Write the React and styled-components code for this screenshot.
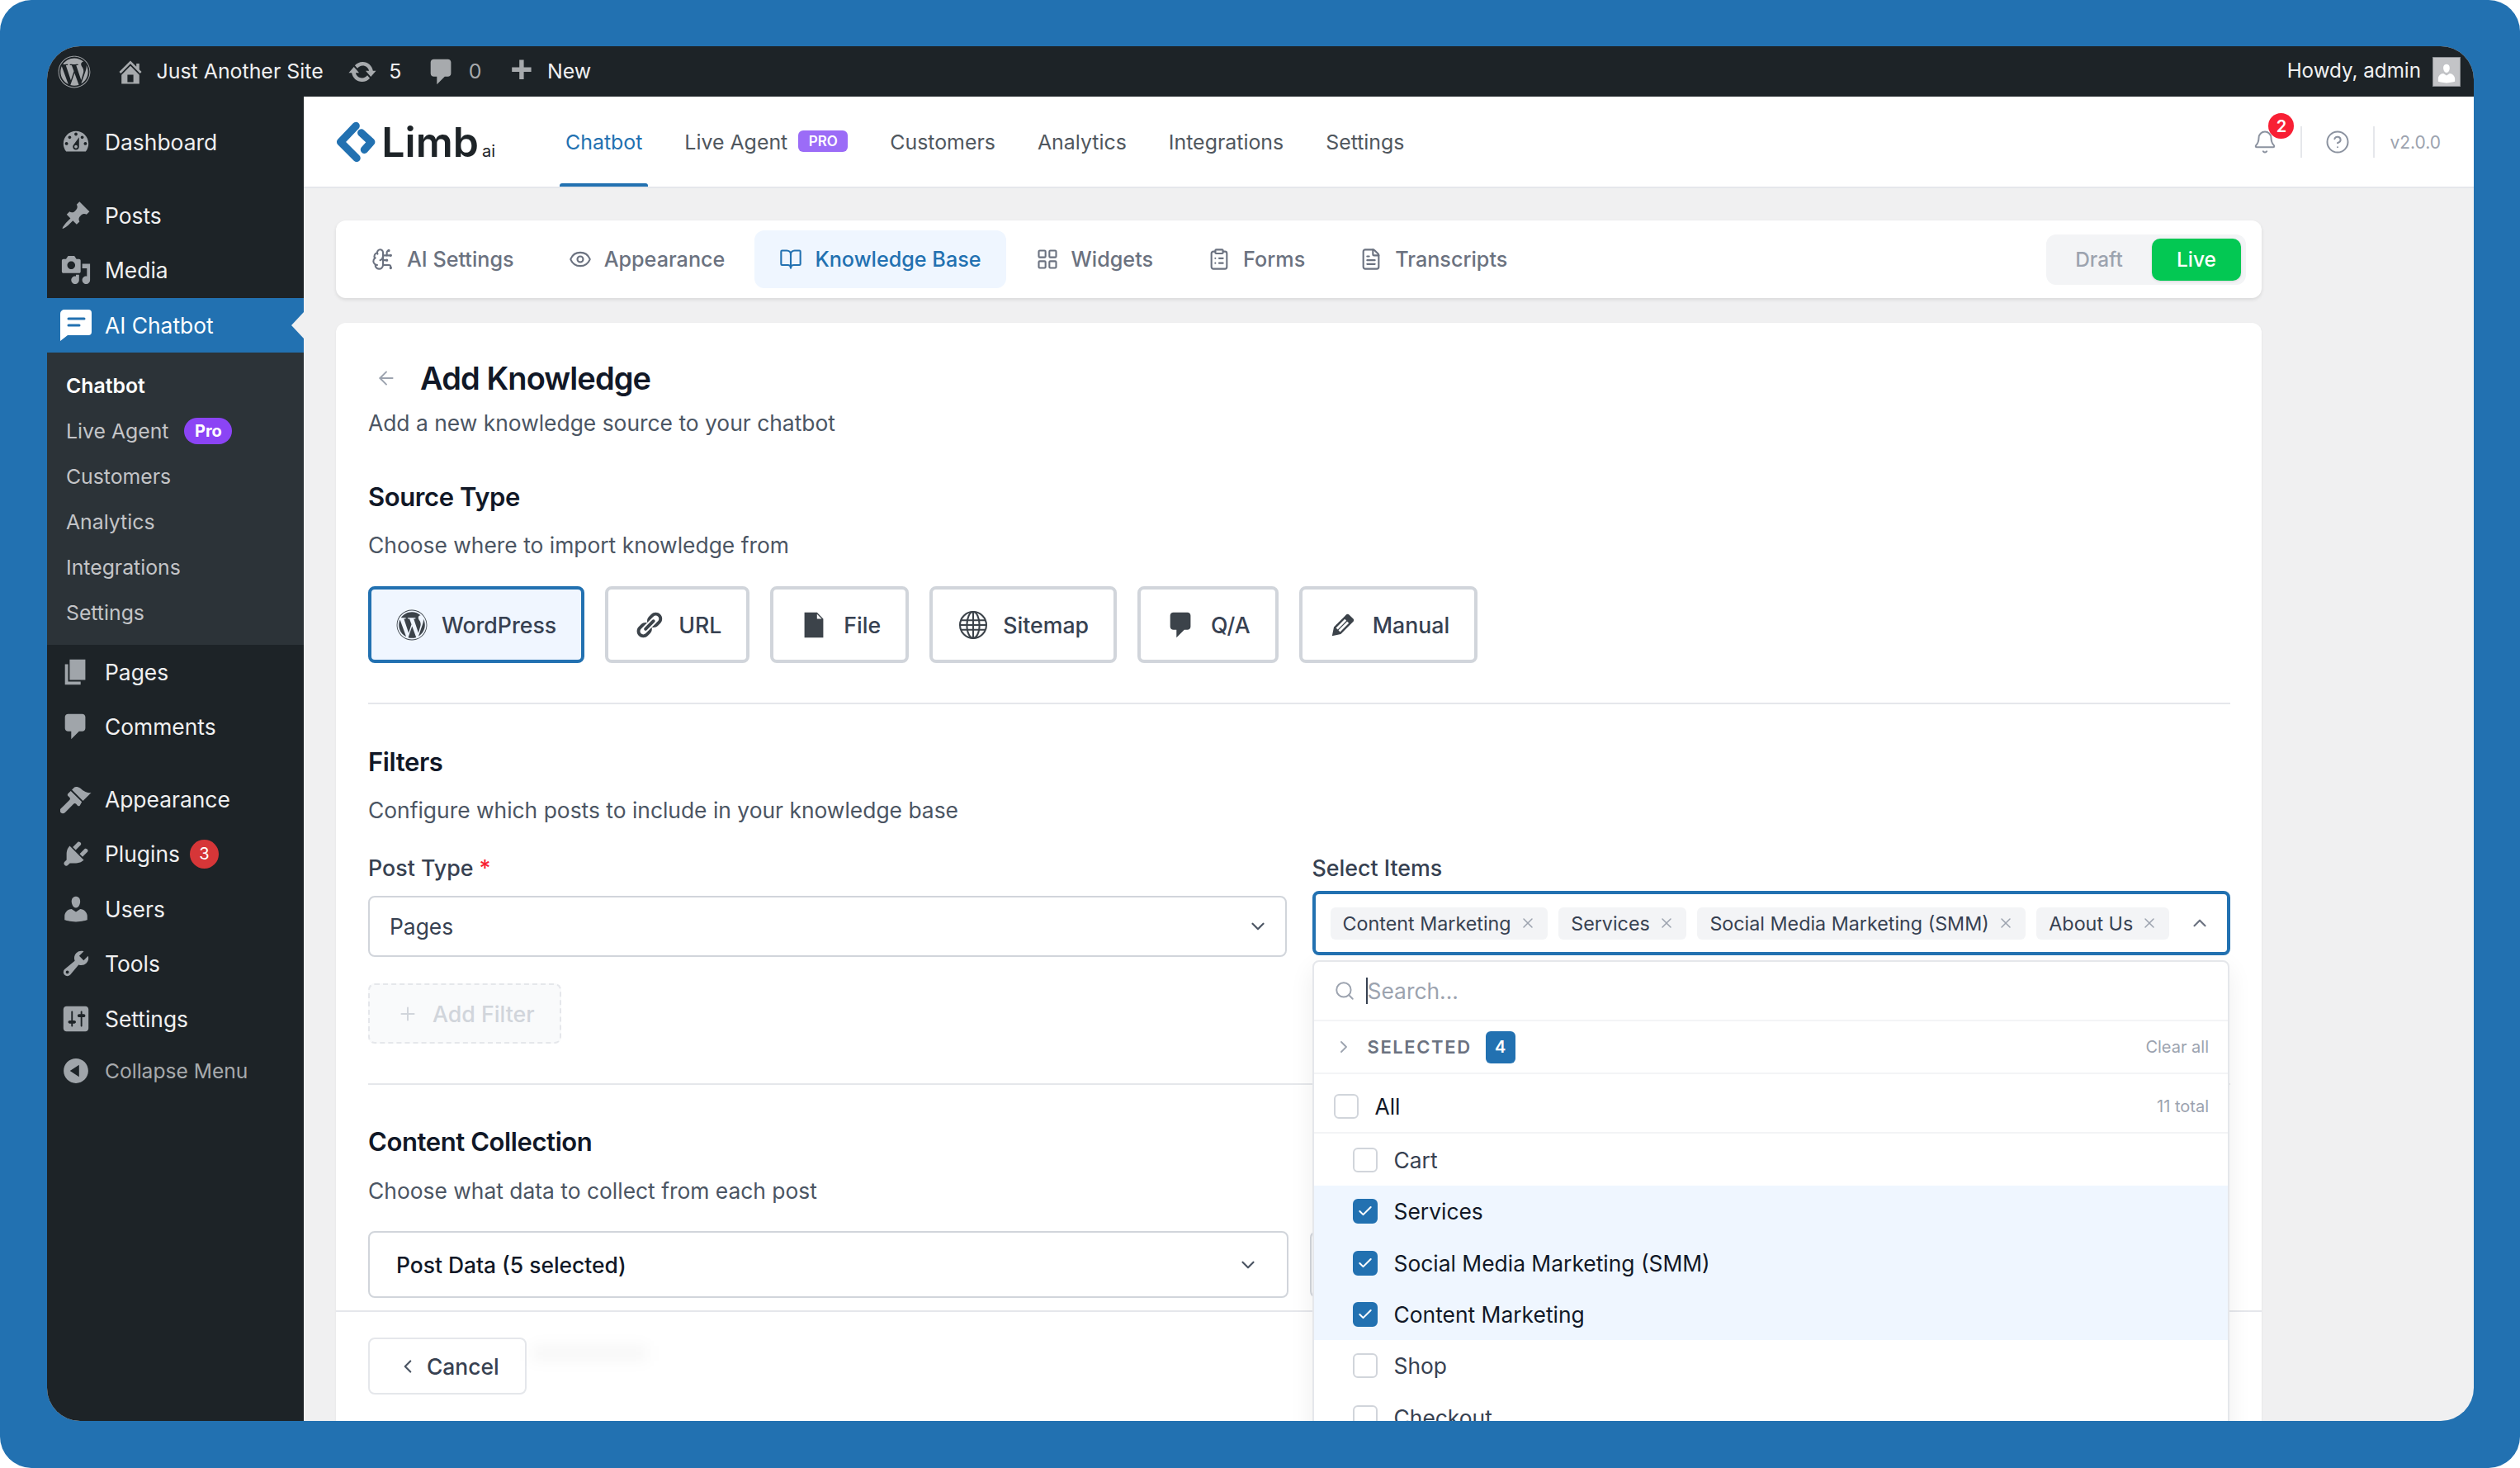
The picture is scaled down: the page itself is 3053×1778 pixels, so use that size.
import React from 'react';
import styled, { createGlobalStyle } from 'styled-components';
import {
  ArrowLeft, BookOpen, Bell, BrainCircuit, Check, ChevronDown, ChevronLeft, ChevronRight, ChevronUp,
  CircleHelp, ClipboardList, Eye, FileText, LayoutGrid, Plus, Search, X,
} from 'lucide-react';
import { FaWordpress } from 'react-icons/fa';

const Global = createGlobalStyle`
  * { box-sizing: border-box; }
  html, body { margin: 0; padding: 0; background: #fff; }
  body { font-family: Inter, "Liberation Sans", sans-serif; -webkit-font-smoothing: antialiased; }
`;

const Dash = ({ d, size = 38, color = 'currentColor' }) => (
  <svg width={size} height={size} viewBox="0 0 20 20" fill={color}><path d={d} /></svg>
);

const P = {
  home: 'M16 8.5l1.53 1.53-1.06 1.06L10 4.62l-6.47 6.47-1.06-1.06L10 2.5l4 4v-2h2v4zm-6-2.46l6 5.99V18H4v-5.97zM12 17v-5H8v5h4z',
  update: 'M10.2 3.28c3.53 0 6.43 2.61 6.92 6h2.08l-3.5 4-3.5-4h2.32c-.45-1.97-2.21-3.45-4.32-3.45-1.45 0-2.73.71-3.54 1.78L4.95 5.66C6.23 4.2 8.11 3.28 10.2 3.28zm-.4 13.44c-3.52 0-6.43-2.61-6.92-6H.8l3.5-4c1.17 1.33 2.33 2.67 3.5 4H5.48c.45 1.97 2.21 3.45 4.32 3.45 1.45 0 2.73-.71 3.54-1.78l1.71 1.95c-1.28 1.46-3.15 2.38-5.25 2.38z',
  comment: 'M5 2h9c1.1 0 2 .9 2 2v7c0 1.1-.9 2-2 2h-2l-5 5v-5H5c-1.1 0-2-.9-2-2V4c0-1.1.9-2 2-2z',
  plus: 'M17 7v3h-5v5H9v-5H4V7h5V2h3v5h5z',
  dashboard: 'M3.76 16h12.48c1.1-1.37 1.76-3.11 1.76-5 0-4.42-3.58-8-8-8s-8 3.58-8 8c0 1.89.66 3.63 1.76 5zM10 4c.55 0 1 .45 1 1s-.45 1-1 1-1-.45-1-1 .45-1 1-1zM6 6c.55 0 1 .45 1 1s-.45 1-1 1-1-.45-1-1 .45-1 1-1zm8 0c.55 0 1 .45 1 1s-.45 1-1 1-1-.45-1-1 .45-1 1-1zm-5.37 5.55L12 7v6c0 1.1-.9 2-2 2s-2-.9-2-2c0-.57.24-1.08.63-1.45zM4 10c.55 0 1 .45 1 1s-.45 1-1 1-1-.45-1-1 .45-1 1-1zm12 0c.55 0 1 .45 1 1s-.45 1-1 1-1-.45-1-1 .45-1 1-1zm-5 3c0-.55-.45-1-1-1s-1 .45-1 1 .45 1 1 1 1-.45 1-1z',
  pin: 'M10.44 3.02l1.82-1.82 6.36 6.35-1.83 1.82c-1.05-.68-2.48-.57-3.41.36l-.75.75c-.92.93-1.04 2.35-.35 3.41l-1.83 1.82-2.41-2.41-2.8 2.79c-.42.42-3.38 2.71-3.8 2.29s1.86-3.39 2.28-3.81l2.79-2.79L4.1 9.36l1.83-1.82c1.05.69 2.48.57 3.4-.36l.75-.75c.93-.92 1.05-2.35.36-3.41z',
  media: 'M13 11V4c0-.55-.45-1-1-1h-1.67L9 1H5L3.67 3H2c-.55 0-1 .45-1 1v7c0 .55.45 1 1 1h10c.55 0 1-.45 1-1zM7 4.5c1.38 0 2.5 1.12 2.5 2.5S8.38 9.5 7 9.5 4.5 8.38 4.5 7 5.62 4.5 7 4.5zM14 6h5v10.5c0 1.38-1.12 2.5-2.5 2.5S14 17.88 14 16.5s1.12-2.5 2.5-2.5c.17 0 .34.02.5.05V9h-3V6zm-4 8.05V13h2v3.5c0 1.38-1.12 2.5-2.5 2.5S7 17.88 7 16.5 8.12 14 9.5 14c.17 0 .34.02.5.05z',
  page: 'M6 15V2h10v13H6zm-1 1h8v2H3V5h2v11z',
  brush: 'M14.48 11.06L7.41 3.99l1.5-1.5c.5-.56 2.3-.47 3.51.32 1.21.8 1.43 1.28 2.91 2.1 1.18.64 2.45 1.26 4.45.85zm-.71.71L6.7 4.7 4.93 6.47c-.39.39-.39 1.02 0 1.41l1.06 1.06c.39.39.39 1.03 0 1.42-.6.6-4.84 4.84-5.6 5.6-.78.78-.78 1.9 0 2.6.7.7 1.8.7 2.6 0l5.6-5.6c.39-.39 1.02-.39 1.41 0l1.06 1.06c.39.39 1.03.39 1.42 0z',
  plug: 'M13.11 4.36L9.87 7.6 8 5.73l3.24-3.24c.35-.34 1.05-.2 1.56.32.52.51.66 1.21.31 1.55zm-8 1.77l.91-1.12 9.01 9.01-1.19.84c-.71.71-2.63 1.16-3.82 1.16H6.14L4.9 17.26c-.59.59-1.54.59-2.12 0-.59-.58-.59-1.53 0-2.12l1.24-1.24v-3.88c0-1.13.4-3.19 1.09-3.89zm7.26 3.97l3.24-3.24c.34-.35 1.04-.21 1.55.31.52.51.66 1.21.31 1.55l-3.24 3.25z',
  users: 'M10 9.25c-2.27 0-2.73-3.44-2.73-3.44C7 4.02 7.82 2 9.97 2c2.16 0 2.98 2.02 2.71 3.81 0 0-.41 3.44-2.68 3.44zm0 2.57L12.72 10c2.39 0 4.52 2.33 4.52 4.53v2.49s-3.65 1.13-7.24 1.13c-3.65 0-7.24-1.13-7.24-1.13v-2.49c0-2.25 1.94-4.48 4.47-4.48z',
  tools: 'M16.68 9.77c-1.34 1.34-3.3 1.67-4.95.99l-5.41 6.52c-.99.99-2.59.99-3.58 0s-.99-2.59 0-3.57l6.52-5.42c-.68-1.65-.35-3.61.99-4.95 1.28-1.28 3.12-1.62 4.72-1.06l-2.89 2.89 2.82 2.82 2.86-2.87c.53 1.58.18 3.39-1.08 4.65zM3.81 16.21c.4.39 1.04.39 1.43 0 .4-.4.4-1.04 0-1.43-.39-.4-1.03-.4-1.43 0-.39.39-.39 1.03 0 1.43z',
  settings: 'M18 16V4c0-1.1-.9-2-2-2H4c-1.1 0-2 .9-2 2v12c0 1.1.9 2 2 2h12c1.1 0 2-.9 2-2zM8 11h1c.55 0 1 .45 1 1s-.45 1-1 1H8v1.5c0 .28-.22.5-.5.5s-.5-.22-.5-.5V13H6c-.55 0-1-.45-1-1s.45-1 1-1h1V5.5c0-.28.22-.5.5-.5s.5.22.5.5V11zm5-2h-1c-.55 0-1-.45-1-1s.45-1 1-1h1V5.5c0-.28.22-.5.5-.5s.5.22.5.5V7h1c.55 0 1 .45 1 1s-.45 1-1 1h-1v5.5c0 .28-.22.5-.5.5s-.5-.22-.5-.5V9z',
  collapse: 'M10 2.16c4.33 0 7.84 3.51 7.84 7.84s-3.51 7.84-7.84 7.84S2.16 14.33 2.16 10 5.71 2.16 10 2.16zm2 11.72V6.12L6.18 9.97z',
  link: 'M17.74 2.76c1.68 1.69 1.68 4.41 0 6.1l-1.53 1.52c-1.12 1.12-2.7 1.47-4.14 1.09l2.62-2.61.76-.77.76-.76c.84-.84.84-2.2 0-3.04-.84-.85-2.2-.85-3.04 0l-.77.76-3.38 3.38c-.37-1.44-.02-3.02 1.1-4.14l1.52-1.53c1.69-1.68 4.42-1.68 6.1 0zM8.59 13.43l5.34-5.34c.42-.42.42-1.1 0-1.52-.44-.43-1.13-.39-1.53 0l-5.33 5.34c-.42.42-.42 1.1 0 1.52.44.43 1.13.39 1.52 0zm-.76 2.29l4.14-4.15c.38 1.44.03 3.02-1.09 4.14l-1.52 1.53c-1.69 1.68-4.41 1.68-6.1 0-1.68-1.68-1.68-4.42 0-6.1l1.53-1.52c1.12-1.12 2.7-1.47 4.14-1.1l-4.14 4.15c-.85.84-.85 2.2 0 3.05.84.84 2.2.84 3.04 0z',
  file: 'M12 2l4 4v12H4V2h8zm0 4h3l-3-3v3z',
  edit: 'M13.89 3.39l2.71 2.72c.46.46.42 1.24.03 1.64l-8.01 8.02-5.56 1.16 1.16-5.58s7.6-7.63 7.99-8.03c.39-.39 1.22-.39 1.68.07zm-2.73 2.79l-5.59 5.61 1.11 1.11 5.54-5.65zm-2.97 8.23l5.58-5.6-1.07-1.08-5.59 5.6z',
};

const Globe = () => (
  <svg width="38" height="38" viewBox="0 0 20 20" fill="none" stroke="#3c434a" strokeWidth="1.1">
    <circle cx="10" cy="10" r="8.4" />
    <ellipse cx="10" cy="10" rx="4" ry="8.4" />
    <path d="M10 1.6v16.8M2.2 7h15.6M2.2 13h15.6M1.6 10h16.8" />
  </svg>
);

const Page = styled.div`
  width: 3053px; height: 1778px; background: #2271b1; border-radius: 38px;
  padding: 56px 56px 57px 57px;
`;
const Window = styled.div`
  width: 100%; height: 100%; border-radius: 40px; overflow: hidden;
  display: flex; flex-direction: column; background: #f0f0f1;
`;
const TopBar = styled.header`
  height: 61px; flex: none; background: #1d2327; color: #f0f0f1; display: flex; align-items: center;
  justify-content: space-between; padding: 0 16px 0 13px; font-size: 24.9px; line-height: 1;
`;
const TopGroup = styled.div`display: flex; align-items: center; gap: 29.5px;`;
const TopItem = styled.div`
  display: flex; align-items: center; gap: 14px; color: ${p => (p.$dim ? '#a7aaad' : '#f0f0f1')};
  font-size: ${p => p.$fs || 24.9}px;
  svg { color: #a7aaad; display: block; }
`;
const Avatar = styled.div`
  width: 34px; height: 36px; background: #c3c4c7; border: 1px solid #8c8f94; overflow: hidden;
  display: flex; align-items: flex-end; justify-content: center;
`;
const Body = styled.div`flex: 1; min-height: 0; display: flex;`;
const Side = styled.nav`
  width: 311px; flex: none; background: #1d2327; padding-top: 22px; display: flex; flex-direction: column;
`;
const MenuGroup = styled.div`margin-bottom: ${p => p.$mb || 0}px;`;
const MenuRow = styled.div`
  position: relative; height: ${p => p.$h || 66.5}px; display: flex; align-items: center; gap: 16px; padding-left: 16px;
  font-size: ${p => (p.$dim ? 24.6 : 26.4)}px; color: ${p => (p.$dim ? '#a7aaad' : '#f0f0f1')};
  background: ${p => (p.$active ? '#2271b1' : 'transparent')};
  ${p => p.$active && 'color: #fff;'}
  svg { color: #a0a5aa; flex: none; display: block; }
  ${p => p.$active && `&::after {
    content: ''; position: absolute; right: 0; top: 50%; margin-top: -16px;
    border: solid transparent; border-width: 16px 15px 16px 0; border-right-color: #f0f0f1;
  }`}
`;
const Bubble = styled.span`
  width: 35px; height: 35px; border-radius: 50%; background: #d63638; color: #fff; font-size: 20px;
  display: inline-flex; align-items: center; justify-content: center; margin-left: -4px;
`;
const Sub = styled.div`background: #2c3338; padding: 12.5px 0 11px;`;
const SubRow = styled.div`
  height: 55px; display: flex; align-items: center; gap: 19px; padding-left: 23px; font-size: 24.8px;
  color: ${p => (p.$on ? '#fff' : '#c3c4c7')}; font-weight: ${p => (p.$on ? 600 : 400)};
`;
const SubPro = styled.span`
  width: 58px; height: 32px; border-radius: 16px; background: #8b44f5; color: #fff; font-size: 20px; font-weight: 700;
  display: inline-flex; align-items: center; justify-content: center;
`;
const Main = styled.main`flex: 1; min-width: 0; display: flex; flex-direction: column;`;
const Header = styled.div`
  height: 111px; flex: none; background: #fff; border-bottom: 2px solid #e5e7eb; display: flex; align-items: stretch;
  padding: 0 40px 0 39px;
`;
const Logo = styled.div`display: flex; align-items: center; gap: 7px; width: 193px; margin-right: 78px; color: #1d2327;`;
const LogoWord = styled.span`font-size: 50px; font-weight: 600; line-height: 1; white-space: nowrap;`;
const LogoAi = styled.span`font-size: 20px; font-weight: 400; margin-left: 4px;`;
const Nav = styled.div`display: flex; gap: 37px; flex: 1; align-items: stretch;`;
const NavItem = styled.div`
  position: relative; display: flex; align-items: center; gap: 13px; padding: 0 7px; font-size: 24.9px;
  color: ${p => (p.$active ? '#2271b1' : '#50575e')};
  ${p => p.$active && `&::after {
    content: ''; position: absolute; left: 0; right: 0; bottom: 0; height: 4px; background: #2271b1; border-radius: 3px 3px 0 0;
  }`}
`;
const ProTag = styled.span`
  width: 60px; height: 26px; border-radius: 6px; background: #9b6cf7; color: #fff; font-size: 17px; font-weight: 600;
  display: inline-flex; align-items: center; justify-content: center; margin-top: -2px;
`;
const HeadRight = styled.div`display: flex; align-items: center; gap: 28px; color: #8c93a0; padding-top: 1px;`;
const BellWrap = styled.div`
  position: relative; width: 30px; height: 30px; svg { display: block; }
`;
const BellBadge = styled.span`
  position: absolute; top: -20px; left: 19px; width: 31px; height: 31px; border-radius: 50%; background: #f81f34; color: #fff;
  font-size: 20px; font-weight: 600; display: flex; align-items: center; justify-content: center;
`;
const VBar = styled.span`width: 2px; height: 38px; background: #e5e7eb;`;
const Version = styled.span`font-size: 21px; color: #9ca3af; margin-left: -10px;`;
const Content = styled.div`flex: 1; min-height: 0; padding: 39px 257px 0 39px; display: flex; flex-direction: column; gap: 30px;`;
const TabsCard = styled.div`
  height: 94px; flex: none; background: #fff; border-radius: 12px; box-shadow: 0 2px 4px rgba(0,0,0,.1);
  display: flex; align-items: center; justify-content: space-between; padding: 0 19px 0 13px;
`;
const Tabs = styled.div`display: flex; gap: 6px;`;
const Tab = styled.div`
  height: 70px; padding: 0 30px; border-radius: 12px; display: flex; align-items: center; gap: 15px; font-size: 25.2px; font-weight: 500;
  color: ${p => (p.$active ? '#2271b1' : '#6b7280')}; background: ${p => (p.$active ? '#eff6ff' : 'transparent')};
`;
const Toggle = styled.div`
  width: 242px; height: 61px; border-radius: 12px; background: #f3f4f6; display: flex; align-items: center; padding: 5px 6px 5px 0;
`;
const ToggleOff = styled.span`flex: 1; text-align: center; color: #9ca3af; font-size: 24.4px; font-weight: 500;`;
const ToggleOn = styled.span`
  width: 108px; height: 51px; border-radius: 10px; background: #03c853; color: #fff; font-size: 24.4px; font-weight: 500;
  display: flex; align-items: center; justify-content: center; box-shadow: 0 1px 3px rgba(0,0,0,.12);
`;
const Card = styled.div`
  flex: 1; min-height: 0; background: #fff; border-radius: 12px 12px 0 0; box-shadow: 0 1px 3px rgba(0,0,0,.06);
  display: flex; flex-direction: column; position: relative;
`;
const CardBody = styled.div`padding: 44px 38px 0 39px;`;
const TitleRow = styled.div`display: flex; align-items: center; gap: 28px; svg { color: #9ca3af; margin-left: 9px; }`;
const Title = styled.h1`margin: 0; font-size: 38px; line-height: 46px; font-weight: 600; color: #111827; letter-spacing: -.9px;`;
const Subtitle = styled.p`margin: 11px 0 0; font-size: 26.4px; line-height: 40px; color: #4b5563;`;
const H2 = styled.h2`
  margin: ${p => p.$mt}px 0 0; font-size: 31px; line-height: 40px; font-weight: 600; color: #111827; letter-spacing: -.4px;
`;
const Desc = styled.p`margin: ${p => p.$mt || 20}px 0 0; font-size: 26.4px; line-height: 36px; color: #4b5563;`;
const Sources = styled.div`display: flex; gap: 25px; margin-top: 32px;`;
const Source = styled.div`
  height: 93px; padding: 0 30px; display: flex; align-items: center; gap: 17px; border-radius: 8px; font-size: 26.7px; font-weight: 500;
  color: #374151; background: ${p => (p.$active ? '#f0f6ff' : '#fff')};
  border: 4px solid ${p => (p.$active ? '#2271b1' : '#d1d5db')};
`;
const SourceIcon = styled.span`
  width: 38px; height: 38px; display: flex; align-items: center; justify-content: center; color: #3c434a; svg { display: block; }
`;
const Hr = styled.div`height: 2px; background: #e5e7eb; margin-top: ${p => p.$mt}px;`;
const Columns = styled.div`
  display: grid; grid-template-columns: 1fr 1fr; gap: ${p => p.$gap || 31}px; margin-top: ${p => p.$mt || 34}px;
`;
const Column = styled.div`position: relative; min-width: 0;`;
const Label = styled.div`font-size: 26.8px; line-height: 36px; font-weight: 500; color: #374151; span { color: #f81f34; }`;
const SelectBox = styled.div`
  margin-top: ${p => p.$mt || 0}px; margin-right: ${p => p.$mr || 0}px; height: ${p => p.$h}px; border: 2.5px solid #d1d5db; border-radius: 8px; background: #fff;
  display: flex; align-items: center; justify-content: space-between; padding: 0 ${p => p.$pr}px 0 ${p => p.$pl}px;
  font-size: 26.4px; color: ${p => p.$strong ? '#111827' : '#374151'}; font-weight: ${p => p.$strong ? 500 : 400};
  svg { color: #4b5563; flex: none; }
`;
const AddFilter = styled.div`
  margin-top: 32px; width: 234px; height: 73px; border: 2px dashed #e5e7eb; border-radius: 8px; background: #f9fafb; color: #d1d5db;
  display: flex; align-items: center; gap: 17px; padding-left: 33px; font-size: 26.8px; font-weight: 500;
`;
const Multi = styled.div`
  margin-top: 10px; height: 78px; border: 4px solid #2271b1; border-radius: 8px; background: #fff;
  display: flex; align-items: center; gap: 13.6px; padding: 0 0 0 18px; svg.up { color: #6b7280; margin-left: 10px; flex: none; }
`;
const Chip = styled.span`
  height: 39px; border-radius: 6px; background: #f3f4f6; color: #374151; font-size: 23.3px; white-space: nowrap;
  display: flex; align-items: center; gap: 10px; padding: 0 14px 0 15px; svg { color: #9ca3af; }
`;
const Dropdown = styled.div`
  position: absolute; z-index: 10; top: 130px; left: 0; right: 1px; background: #fff; border: 2px solid #e5e7eb; border-radius: 8px 8px 0 0;
  box-shadow: 0 10px 30px rgba(0,0,0,.07);
`;
const SearchRow = styled.div`
  height: 72px; display: flex; align-items: center; gap: 13px; padding-left: 24px; border-bottom: 2px solid #f3f4f6; color: #9ca3af; font-size: 26.4px;
`;
const Caret = styled.span`width: 2px; height: 32px; background: #374151; margin-right: -13px;`;
const SelectedRow = styled.div`
  height: 64px; display: flex; align-items: center; padding: 0 23px 0 24px; gap: 17px; border-bottom: 2px solid #f3f4f6; color: #9ca3af;
`;
const SelectedLabel = styled.span`font-size: 22px; font-weight: 600; letter-spacing: 1.6px; color: #6b7280;`;
const Count = styled.span`
  width: 36px; height: 39px; border-radius: 6px; background: #2271b1; color: #fff; font-size: 20px; font-weight: 600;
  display: flex; align-items: center; justify-content: center;
`;
const Meta = styled.span`margin-left: auto; font-size: 20px; font-weight: 400; color: #9ca3af;`;
const AllRow = styled.div`
  height: 72px; display: flex; align-items: center; gap: 20px; padding: 8px 23px 0 24px; border-bottom: 2px solid #f3f4f6; font-size: 26.4px; font-weight: 400; color: #111827;
`;
const ItemRow = styled.div`
  height: ${p => p.$h || 62.4}px; display: flex; align-items: center; gap: 20px; padding-left: 47px; font-size: 26.4px;
  color: ${p => (p.$on ? '#111827' : '#374151')}; background: ${p => (p.$on ? '#eff6ff' : 'transparent')};
`;
const Box = styled.span`
  width: 30px; height: 30px; flex: none; border-radius: 6px; display: flex; align-items: center; justify-content: center;
  border: 2px solid ${p => (p.$on ? '#2271b1' : '#d1d5db')}; background: ${p => (p.$on ? '#2271b1' : '#fff')}; color: #fff;
`;
const Footer = styled.div`
  margin-top: 15px; border-top: 2px solid #e5e7eb; padding: 31px 0 0 39px; display: flex; gap: 6px; flex: 1; align-items: flex-start;
`;
const Cancel = styled.div`
  width: 192px; height: 69px; border: 2px solid #e5e7eb; border-radius: 8px; display: flex; align-items: center; gap: 10px; padding-left: 33px;
  font-size: 26.4px; font-weight: 500; color: #374151; svg { color: #4b5563; }
`;
const Ghost = styled.span`width: 140px; height: 18px; margin-top: 10px; background: rgba(0,0,0,.035); filter: blur(9px);`;

const menuA = [['Dashboard', P.dashboard]];
const menuB = [['Posts', P.pin], ['Media', P.media]];
const menuC = [['Pages', P.page], ['Comments', P.comment]];
const tabs = [
  ['AI Settings', BrainCircuit], ['Appearance', Eye], ['Knowledge Base', BookOpen, true],
  ['Widgets', LayoutGrid], ['Forms', ClipboardList], ['Transcripts', FileText],
];
const items = [['Cart', false, 63], ['Services', true], ['Social Media Marketing (SMM)', true], ['Content Marketing', true], ['Shop', false], ['Checkout', false]];
const chips = ['Content Marketing', 'Services', 'Social Media Marketing (SMM)', 'About Us'];

export default function App() {
  return (
    <>
      <Global />
      <Page>
        <Window>
          <TopBar>
            <TopGroup>
              <TopItem><FaWordpress size={40} /></TopItem>
              <TopItem><Dash d={P.home} size={36} />Just Another Site</TopItem>
              <TopItem><Dash d={P.update} size={36} />5</TopItem>
              <TopItem $dim><Dash d={P.comment} size={38} />0</TopItem>
              <TopItem><Dash d={P.plus} size={36} />New</TopItem>
            </TopGroup>
            <TopItem $fs={24.2}>Howdy, admin
              <Avatar><svg width="28" height="30" viewBox="0 0 20 20" fill="#fff"><path d={P.users} /></svg></Avatar>
            </TopItem>
          </TopBar>
          <Body>
            <Side>
              <MenuGroup $mb={22}>{menuA.map(([t, d]) => <MenuRow key={t}><Dash d={d} />{t}</MenuRow>)}</MenuGroup>
              <MenuGroup>
                {menuB.map(([t, d]) => <MenuRow key={t}><Dash d={d} />{t}</MenuRow>)}
                <MenuRow $active>
                  <svg width="38" height="38" viewBox="0 0 38 38">
                    <path fill="#fff" d="M5 0h29a4 4 0 0 1 4 4v23a4 4 0 0 1-4 4H9l-9 7V5a5 5 0 0 1 5-5z" />
                    <path stroke="#2271b1" strokeWidth="3" strokeLinecap="round" d="M10 11h19M10 19h13" />
                  </svg>
                  AI Chatbot
                </MenuRow>
                <Sub>
                  <SubRow $on>Chatbot</SubRow>
                  <SubRow>Live Agent<SubPro>Pro</SubPro></SubRow>
                  <SubRow>Customers</SubRow>
                  <SubRow>Analytics</SubRow>
                  <SubRow>Integrations</SubRow>
                  <SubRow>Settings</SubRow>
                </Sub>
              </MenuGroup>
              <MenuGroup $mb={21}>{menuC.map(([t, d]) => <MenuRow key={t}><Dash d={d} />{t}</MenuRow>)}</MenuGroup>
              <MenuRow><Dash d={P.brush} />Appearance</MenuRow>
              <MenuRow><Dash d={P.plug} />Plugins<Bubble>3</Bubble></MenuRow>
              <MenuRow><Dash d={P.users} />Users</MenuRow>
              <MenuRow><Dash d={P.tools} />Tools</MenuRow>
              <MenuRow><Dash d={P.settings} />Settings</MenuRow>
              <MenuRow $dim $h={60}><Dash d={P.collapse} />Collapse Menu</MenuRow>
            </Side>
            <Main>
              <Header>
                <Logo>
                  <svg width="52" height="54" viewBox="0 0 52 54" fill="none" stroke="#2271b1" strokeWidth="10" strokeLinecap="round" strokeLinejoin="round">
                    <path d="M26 6L6 27l21 21" />
                    <path d="M33 15l13 12-9 10" />
                  </svg>
                  <LogoWord>Limb<LogoAi>ai</LogoAi></LogoWord>
                </Logo>
                <Nav>
                  <NavItem $active>Chatbot</NavItem>
                  <NavItem>Live Agent<ProTag>PRO</ProTag></NavItem>
                  <NavItem>Customers</NavItem>
                  <NavItem>Analytics</NavItem>
                  <NavItem>Integrations</NavItem>
                  <NavItem>Settings</NavItem>
                </Nav>
                <HeadRight>
                  <BellWrap><Bell size={30} strokeWidth={1.6} /><BellBadge>2</BellBadge></BellWrap>
                  <VBar />
                  <CircleHelp size={30} strokeWidth={1.6} />
                  <VBar />
                  <Version>v2.0.0</Version>
                </HeadRight>
              </Header>
              <Content>
                <TabsCard>
                  <Tabs>
                    {tabs.map(([t, I, on]) => <Tab key={t} $active={on}><I size={28} strokeWidth={1.8} />{t}</Tab>)}
                  </Tabs>
                  <Toggle><ToggleOff>Draft</ToggleOff><ToggleOn>Live</ToggleOn></Toggle>
                </TabsCard>
                <Card>
                  <CardBody>
                    <TitleRow><ArrowLeft size={26} strokeWidth={1.8} /><Title>Add Knowledge</Title></TitleRow>
                    <Subtitle>Add a new knowledge source to your chatbot</Subtitle>
                    <H2 $mt={50}>Source Type</H2>
                    <Desc>Choose where to import knowledge from</Desc>
                    <Sources>
                      <Source $active><SourceIcon><FaWordpress size={38} /></SourceIcon>WordPress</Source>
                      <Source><SourceIcon><Dash d={P.link} size={36} /></SourceIcon>URL</Source>
                      <Source><SourceIcon><Dash d={P.file} size={38} /></SourceIcon>File</Source>
                      <Source><SourceIcon><Globe /></SourceIcon>Sitemap</Source>
                      <Source><SourceIcon><Dash d={P.comment} size={38} /></SourceIcon>Q/A</Source>
                      <Source><SourceIcon><Dash d={P.edit} size={38} /></SourceIcon>Manual</Source>
                    </Sources>
                    <Hr $mt={48} />
                    <H2 $mt={50}>Filters</H2>
                    <Desc>Configure which posts to include in your knowledge base</Desc>
                    <Columns>
                      <Column>
                        <Label>Post Type <span>*</span></Label>
                        <SelectBox $mt={16} $h={74} $pl={24} $pr={20}>Pages<ChevronDown size={26} strokeWidth={2} /></SelectBox>
                        <AddFilter><Plus size={26} strokeWidth={1.8} />Add Filter</AddFilter>
                      </Column>
                      <Column>
                        <Label>Select Items</Label>
                        <Multi>
                          {chips.map(c => <Chip key={c}>{c}<X size={20} strokeWidth={1.8} /></Chip>)}
                          <ChevronUp className="up" size={26} strokeWidth={2} />
                        </Multi>
                        <Dropdown>
                          <SearchRow><Search size={26} strokeWidth={1.8} /><Caret />Search...</SearchRow>
                          <SelectedRow>
                            <ChevronRight size={24} strokeWidth={1.8} />
                            <SelectedLabel>SELECTED</SelectedLabel>
                            <Count>4</Count>
                            <Meta>Clear all</Meta>
                          </SelectedRow>
                          <AllRow><Box />All<Meta>11 total</Meta></AllRow>
                          {items.map(([t, on, h]) => (
                            <ItemRow key={t} $on={on} $h={h}>
                              <Box $on={on}>{on && <Check size={20} strokeWidth={2.4} />}</Box>{t}
                            </ItemRow>
                          ))}
                        </Dropdown>
                      </Column>
                    </Columns>
                    <Hr $mt={48} />
                    <H2 $mt={49}>Content Collection</H2>
                    <Desc $mt={21}>Choose what data to collect from each post</Desc>
                    <Columns $mt={31} $gap={26}>
                      <SelectBox $h={81} $pl={32} $pr={34} $strong>Post Data (5 selected)<ChevronDown size={26} strokeWidth={2} /></SelectBox>
                      <SelectBox $h={81} $pl={31} $pr={22} $mr={20} />
                    </Columns>
                  </CardBody>
                  <Footer>
                    <Cancel><ChevronLeft size={26} strokeWidth={2} />Cancel</Cancel>
                    <Ghost />
                  </Footer>
                </Card>
              </Content>
            </Main>
          </Body>
        </Window>
      </Page>
    </>
  );
}
